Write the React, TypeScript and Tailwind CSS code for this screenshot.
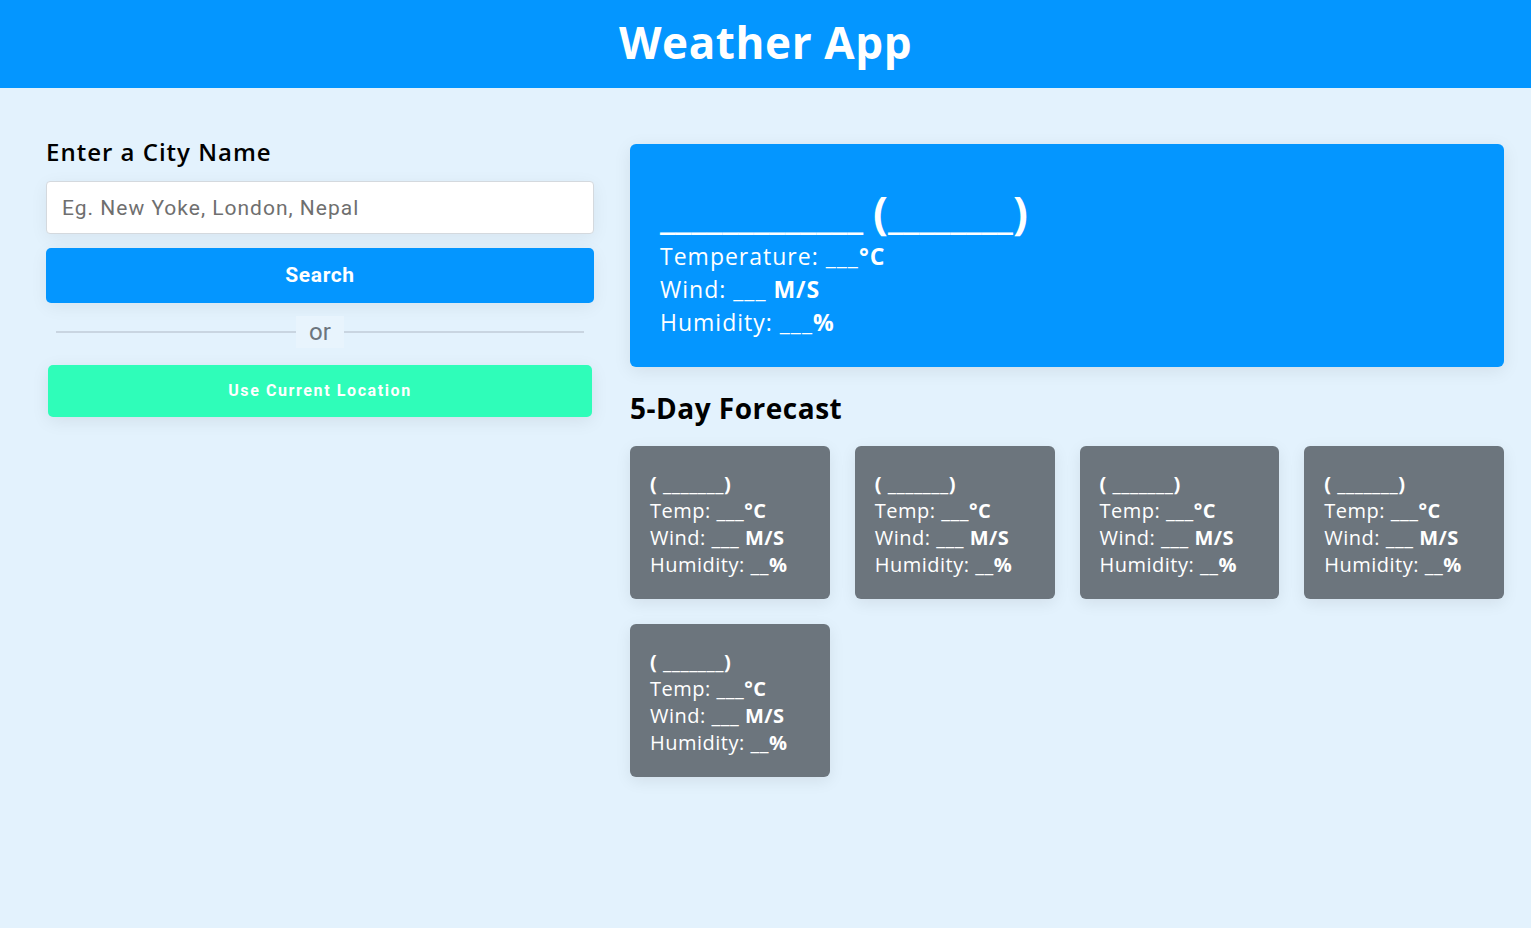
import React from "react";

const days = [1, 2, 3, 4, 5];

function ForecastCard() {
  return (
    <div className="h-[153px] rounded-md bg-[#6c757d] px-5 pt-[24px] text-[20px] leading-[27px] tracking-[0.5px] text-white shadow-[0_4px_16px_rgba(0,0,0,0.08)]">
      <h3 className="font-bold">( _______)</h3>
      <p>
        Temp: ___<b>°C</b>
      </p>
      <p>
        Wind: ___ <b>M/S</b>
      </p>
      <p>
        Humidity: __<b>%</b>
      </p>
    </div>
  );
}

export default function App() {
  return (
    <div className="min-h-[928px] bg-[#e3f2fd] font-['Open_Sans',sans-serif]">
      <header className="flex h-[88px] items-center justify-center bg-[#0496ff] pb-1">
        <h1 className="text-[44px] font-bold tracking-[0.6px] text-white">Weather App</h1>
      </header>

      <main className="flex gap-9 pl-[46px] pr-[27px] pt-[56px]">
        {/* search side */}
        <section className="w-[548px] shrink-0">
          <h3 className="-mt-[7px] text-[24px] font-semibold leading-[30px] tracking-[1px] text-black">
            Enter a City Name
          </h3>
          <input
            type="text"
            placeholder="Eg. New Yoke, London, Nepal"
            className="mt-[14px] h-[53px] w-full rounded border border-[#d4d9de] bg-white px-[15px] font-['Roboto',sans-serif] text-[21px] tracking-[1px] text-[#333] shadow-[0_4px_18px_rgba(0,0,0,0.06)] outline-none placeholder:text-[#6f6f6f]"
          />
          <button className="mt-[14px] h-[55px] w-full rounded-[5px] bg-[#0496ff] font-['Roboto',sans-serif] text-[21px] font-bold tracking-[0.6px] text-white shadow-[0_4px_18px_rgba(0,0,0,0.06)]">
            Search
          </button>
          <div className="mx-[10px] mt-[13px] flex items-center">
            <div className="h-[2px] flex-1 bg-[#c9d5e1]" />
            <span className="bg-[#e8f4fd] px-[13px] font-['Roboto',sans-serif] text-[24px] leading-[32px] text-[#6c757d]">
              or
            </span>
            <div className="h-[2px] flex-1 bg-[#c9d5e1]" />
          </div>
          <button className="mx-[2px] mt-[17px] h-[52px] w-[544px] rounded-[5px] bg-[#2ffdb9] font-['Roboto',sans-serif] text-[16px] font-bold tracking-[1.6px] text-white shadow-[0_4px_18px_rgba(0,0,0,0.08)]">
            Use Current Location
          </button>
        </section>

        {/* weather side */}
        <section className="flex-1">
          <div className="h-[223px] rounded-md bg-[#0496ff] px-[30px] pt-[42px] text-white shadow-[0_4px_18px_rgba(0,0,0,0.08)]">
            <h2 className="text-[38px] font-bold leading-[52px]">
              _____________ <span className="text-[44px]">(</span>________<span className="text-[44px]">)</span>
            </h2>
            <p className="text-[23px] leading-[33px] tracking-[1px]">
              Temperature: ___<b>°C</b>
            </p>
            <p className="text-[23px] leading-[33px] tracking-[1px]">
              Wind: ___ <b>M/S</b>
            </p>
            <p className="text-[23px] leading-[33px] tracking-[1px]">
              Humidity: ___<b>%</b>
            </p>
          </div>

          <h2 className="mt-[24px] text-[28px] font-bold leading-[34px] tracking-[0.5px] text-black">
            5-Day Forecast
          </h2>
          <div className="mt-[21px] grid grid-cols-4 gap-[25px]">
            {days.map((d) => (
              <ForecastCard key={d} />
            ))}
          </div>
        </section>
      </main>
    </div>
  );
}
